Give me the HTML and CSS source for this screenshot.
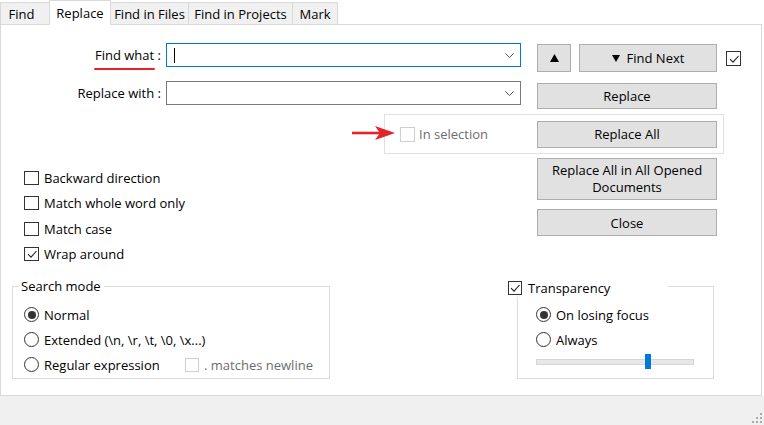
FILE: index.html
```html
<!DOCTYPE html>
<html>
<head>
<meta charset="utf-8">
<title>Replace</title>
<link rel="stylesheet" href="styles.css">
</head>
<body>
<div class="window">
  <div class="tabs">
    <div class="tab t-find">Find</div>
    <div class="tab active t-replace">Replace</div>
    <div class="tab t-files">Find in Files</div>
    <div class="tab t-projects">Find in Projects</div>
    <div class="tab t-mark">Mark</div>
  </div>
  <div class="panel">
    <div class="row row-find">
      <div class="lbl"><span class="marked">Find what :</span></div>
      <div class="combo focus">
        <span class="caret"></span>
        <svg class="chev" width="9" height="5" viewBox="0 0 9 5"><polyline points="0.5,0.5 4.5,4.5 8.5,0.5" fill="none" stroke="#555" stroke-width="1"/></svg>
      </div>
      <button class="btn btn-up"><svg width="9" height="8" viewBox="0 0 9 8"><polygon points="4.5,0 9,8 0,8" fill="#000"/></svg></button>
      <button class="btn btn-next"><svg width="8" height="7" viewBox="0 0 8 7"><polygon points="0,0 8,0 4,7" fill="#000"/></svg><span>Find Next</span></button>
      <span class="cb top-cb"><svg width="12" height="12" viewBox="0 0 12 12"><polyline points="2,6.2 5,9.2 10.5,3" fill="none" stroke="#222" stroke-width="1.1"/></svg></span>
    </div>
    <div class="row row-replace">
      <div class="lbl">Replace with :</div>
      <div class="combo">
        <svg class="chev" width="9" height="5" viewBox="0 0 9 5"><polyline points="0.5,0.5 4.5,4.5 8.5,0.5" fill="none" stroke="#555" stroke-width="1"/></svg>
      </div>
      <button class="btn btn-wide btn-replace">Replace</button>
    </div>
    <div class="row row-sel">
      <div class="selbox">
        <svg class="arrow" width="44" height="16" viewBox="0 0 44 16"><line x1="0" y1="8" x2="30" y2="8" stroke="#e3232a" stroke-width="2.6"/><path d="M43,8 L23,1 L28,8 L23,15 Z" fill="#e3232a"/></svg>
        <span class="cb disabled sel-cb"></span>
        <span class="dis sel-text">In selection</span>
        <button class="btn btn-wide btn-all">Replace All</button>
      </div>
    </div>
    <div class="row row-opts">
      <div class="opts">
        <div class="opt"><span class="cb"></span><span>Backward direction</span></div>
        <div class="opt"><span class="cb"></span><span>Match whole word only</span></div>
        <div class="opt"><span class="cb"></span><span>Match case</span></div>
        <div class="opt"><span class="cb"><svg width="12" height="12" viewBox="0 0 12 12"><polyline points="2,6.2 5,9.2 10.5,3" fill="none" stroke="#222" stroke-width="1.1"/></svg></span><span>Wrap around</span></div>
      </div>
      <div class="actions">
        <button class="btn btn-wide btn-docs"><span class="two">Replace All in All Opened<br>Documents</span></button>
        <button class="btn btn-wide btn-close">Close</button>
      </div>
    </div>
    <div class="row row-groups">
      <div class="group g-mode">
        <div class="gtitle">Search mode</div>
        <div class="radios">
          <div class="ropt"><span class="rb on"></span><span>Normal</span></div>
          <div class="ropt"><span class="rb"></span><span>Extended (\n, \r, \t, \0, \x...)</span></div>
          <div class="ropt"><span class="rb"></span><span class="rx">Regular expression</span><span class="cb disabled"></span><span class="dis">. matches newline</span></div>
        </div>
      </div>
      <div class="group g-trans">
        <div class="gtitle gtitle-cb"><span class="cb tr-cb"><svg width="12" height="12" viewBox="0 0 12 12"><polyline points="2,6.2 5,9.2 10.5,3" fill="none" stroke="#222" stroke-width="1.1"/></svg></span><span>Transparency</span></div>
        <div class="radios">
          <div class="ropt"><span class="rb on"></span><span>On losing focus</span></div>
          <div class="ropt"><span class="rb"></span><span>Always</span></div>
        </div>
        <svg class="slider" width="160" height="17" viewBox="0 0 160 17"><rect x="0.5" y="6.5" width="157" height="5" fill="#e7e7e7" stroke="#d6d6d6"/><rect x="109" y="1" width="6" height="15" fill="#0078d7"/></svg>
      </div>
    </div>
  </div>
  <div class="statusbar">
    <svg class="grip" width="12" height="12" viewBox="0 0 12 12"><g fill="#a9a9a9"><rect x="10" y="2" width="2" height="2"/><rect x="6" y="6" width="2" height="2"/><rect x="10" y="6" width="2" height="2"/><rect x="2" y="10" width="2" height="2"/><rect x="6" y="10" width="2" height="2"/><rect x="10" y="10" width="2" height="2"/></g></svg>
  </div>
</div>
</body>
</html>
```
FILE: styles.css
```css
* { box-sizing: border-box; }
html, body { margin: 0; padding: 0; }
body {
  width: 764px;
  height: 425px;
  overflow: hidden;
  background: #fff;
  font-family: "Open Sans", "Noto Sans", sans-serif;
  font-size: 13px;
  color: #000;
}
.window { display: flex; flex-direction: column; height: 425px; }

/* tabs */
.tabs { display: flex; align-items: flex-end; height: 24px; flex: none; }
.tab {
  height: 22px;
  background: #f0f0f0;
  border-top: 1px solid #d9d9d9;
  border-left: 1px solid #d9d9d9;
  display: flex;
  align-items: center;
  justify-content: center;
  white-space: nowrap;
}
.tab.active {
  height: 25px;
  margin-bottom: -1px;
  background: #fff;
  border-right: 1px solid #d9d9d9;
  position: relative;
  z-index: 1;
}
.t-find { width: 49px; padding-right: 7px; }
.t-replace { width: 62px; }
.t-files { width: 77px; border-left: none; }
.t-projects { width: 104px; }
.t-mark { width: 46px; border-right: 1px solid #d9d9d9; }

/* panel */
.panel {
  flex: none;
  height: 372px;
  width: 762px;
  border: 1px solid #d9d9d9;
  background: #fff;
}
.row { display: flex; align-items: flex-start; }

.lbl { width: 160px; height: 24px; line-height: 24px; text-align: right; white-space: nowrap; flex: none; }
.marked { position: relative; display: inline-block; line-height: 24px; }
.marked::after {
  content: "";
  position: absolute;
  left: -1px;
  right: 6px;
  top: 25px;
  height: 2px;
  border-radius: 1px;
  background: #e3232a;
}

.combo {
  margin-left: 5px;
  width: 355px;
  height: 24px;
  border: 1px solid #7a7a7a;
  background: #fff;
  display: flex;
  align-items: center;
  padding-right: 6px;
  flex: none;
}
.combo.focus { border-color: #0078d7; }
.caret { width: 1px; height: 15px; background: #000; margin-left: 7px; }
.chev { margin-left: auto; display: block; }

.btn {
  font: inherit;
  color: #000;
  background: #e1e1e1;
  border: 1px solid #adadad;
  padding: 0;
  margin: 0;
  display: flex;
  align-items: center;
  justify-content: center;
  flex: none;
}
.btn-wide { width: 180px; height: 27px; }

.row-find { margin-top: 18px; height: 29px; }
.btn-up { margin-left: 16px; margin-top: 1px; width: 34px; height: 28px; }
.btn-next { margin-left: 8px; margin-top: 1px; width: 138px; height: 28px; gap: 7px; }
.top-cb { margin-left: 9px; margin-top: 8px; width: 15px !important; height: 15px !important; }

.row-replace { margin-top: 9px; height: 28px; }
.btn-replace { margin-left: 16px; margin-top: 2px; height: 26px; }

.row-sel { margin-top: 5px; height: 40px; }
.selbox {
  position: relative;
  margin-left: 383px;
  width: 340px;
  height: 40px;
  border: 1px solid #e0e0e0;
  display: flex;
  align-items: center;
}
.arrow { position: absolute; left: -33px; top: 10px; }
.sel-cb { margin-left: 15px; width: 15px !important; height: 15px !important; }
.sel-text { margin-left: 4px; }
.btn-all { margin-left: auto; margin-right: 6px; }

.row-opts {
  margin-top: 4px;
  height: 110px;
  display: grid;
  grid-template-columns: 536px 180px;
}
.opts { padding-left: 23px; padding-top: 7px; }
.opt { display: flex; align-items: center; height: 25.5px; gap: 6px; white-space: nowrap; }
.opts .cb { width: 15px; }
.opts .opt { gap: 5px; }
.btn-docs { height: 42px; }
.two { display: block; line-height: 17px; text-align: center; }
.btn-close { margin-top: 9px; }

/* group boxes */
.row-groups { margin-top: 18px; }
.group { border: 1px solid #dcdcdc; height: 93px; flex: none; }
.g-mode { margin-left: 11px; width: 318px; }
.g-trans { margin-left: 187px; width: 197px; }
.gtitle {
  margin-top: -10px;
  margin-left: 5px;
  padding: 0 3px;
  background: #fff;
  height: 18px;
  line-height: 18px;
  width: fit-content;
  white-space: nowrap;
}
.radios { margin-top: 7px; }
.g-mode .radios { padding-left: 11px; }
.gtitle-cb {
  margin-top: -8px;
  margin-left: -10px;
  padding: 0;
  width: 160px;
  display: flex;
  align-items: center;
  gap: 6px;
}
.tr-cb { width: 15px; height: 15px; }
.g-trans .radios { margin-top: 5px; padding-left: 18px; }
.ropt { display: flex; align-items: center; height: 25px; gap: 5px; white-space: nowrap; }
.rx { width: 136px; }
.slider { display: block; margin-left: 18px; margin-top: 1px; }

/* controls */
.cb {
  width: 14px;
  height: 14px;
  border: 1px solid #333;
  background: #fff;
  flex: none;
  display: flex;
  align-items: center;
  justify-content: center;
}
.cb.disabled { border-color: #cfcfcf; }
.rb {
  width: 15px;
  height: 15px;
  border: 1px solid #333;
  border-radius: 50%;
  background: #fff;
  flex: none;
  display: flex;
  align-items: center;
  justify-content: center;
}
.rb.on::after { content: ""; width: 8px; height: 8px; border-radius: 50%; background: #333; }
.dis { color: #6d6d6d; }

/* status bar */
.statusbar {
  flex: 1;
  background: #f0f0f0;
  display: flex;
  justify-content: flex-end;
  align-items: flex-end;
}
.grip { display: block; margin: 0 2px 2px 0; }
```
